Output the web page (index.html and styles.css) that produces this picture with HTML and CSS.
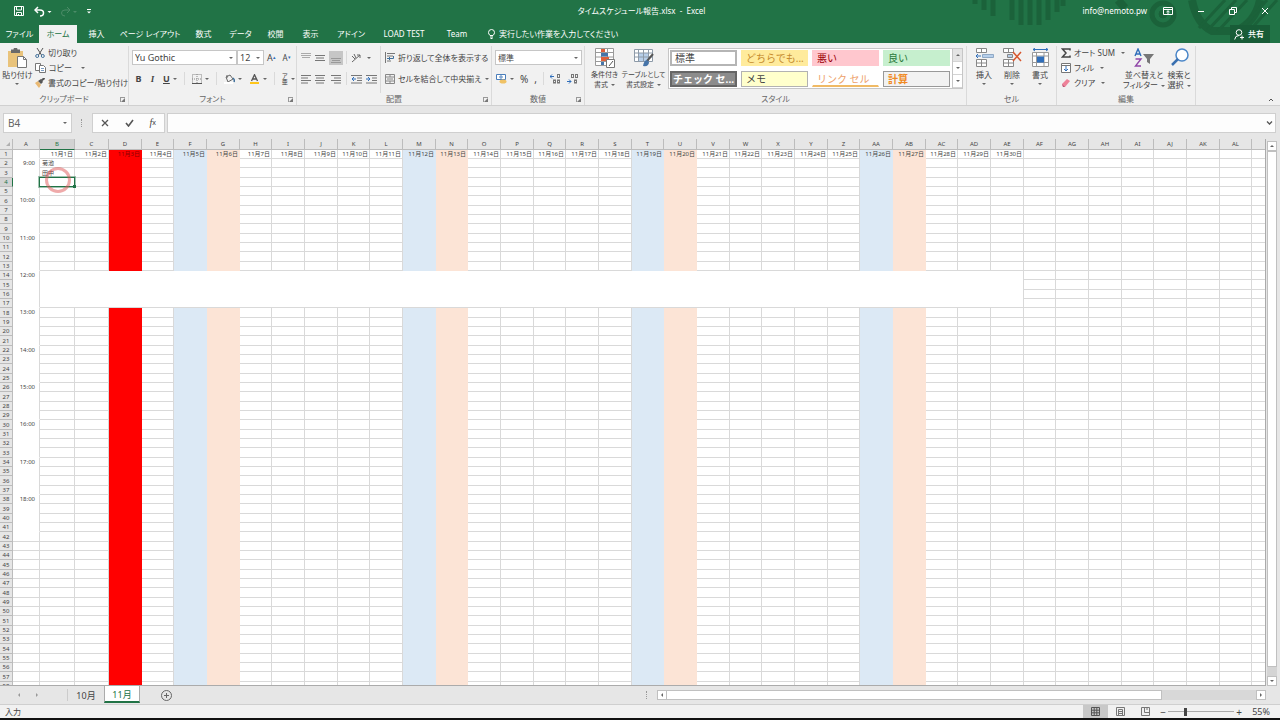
FILE: index.html
```
<!DOCTYPE html>
<html lang="ja">
<head>
<meta charset="utf-8">
<title>タイムスケジュール報告.xlsx - Excel</title>
<link rel="stylesheet" href="styles.css">
</head>
<body>
<div class="app">
  <header class="top">
    <svg class="pattern" width="330" height="43" viewBox="0 0 330 43" fill="none" stroke="#1b623a">
      <path d="M25 0v4M34 0v10M43 0v16M62 0v20M71 0v25M80 0v25M89 0v25M98 0v20M107 0v12M113 0v6" stroke-width="5"/>
      <circle cx="213" cy="14" r="11" stroke-width="5"/><circle cx="213" cy="14" r="4" fill="#1b623a"/>
      <path d="M168 0l7 8M242 0c3 16 10 26 20 31h24c13-6 21-16 24-31" stroke-width="8"/>
      <path d="M249 28l26-28M258 30l28-30M268 31l29-31M293 27l24-27M301 29l26-29" stroke-width="3"/>
    </svg>
    <div class="titlebar">
      <div class="quick">
        <button class="ib" aria-label="上書き保存"><svg width="10" height="10" viewBox="0 0 10 10" fill="none" stroke="#fff"><path d="M.5.5h9v9h-9zM2.500.5v3.500h5v-3.500M2.500 9.500v-3h5v3M4.500 8v1.500"/></svg></button>
        <button class="ib undo" aria-label="元に戻す"><svg width="18" height="11" viewBox="0 0 18 11" fill="none" stroke="#fff"><path d="M1.500 4h4.500q3.500 0 3.500 3t-3.500 3" stroke-width="1.500"/><path d="M4 1L1 4l3 3" stroke-width="1.500"/><path d="M13.500 5h4l-2 2z" fill="#fff" stroke="none"/></svg></button>
        <button class="ib" aria-label="やり直し"><svg width="18" height="11" viewBox="0 0 18 11" fill="none" stroke="#4c8c68"><path d="M9 4H5q-3.500 0-3.500 3T5 10M7 1l3 3-3 3"/><path d="M13 5h4l-2 2z" fill="#4c8c68" stroke="none"/></svg></button>
        <button class="ib" aria-label="クイック アクセス"><svg width="6" height="7" viewBox="0 0 6 7" fill="#fff"><path d="M1 1h4v1H1zM1 3.500h4l-2 2z"/></svg></button>
      </div>
      <h1 class="title">タイムスケジュール報告.xlsx&nbsp; -&nbsp; Excel</h1>
      <div class="account">
        <span class="mail">info@nemoto.pw</span>
        <button class="ib" aria-label="リボンの表示"><svg width="10" height="8" viewBox="0 0 10 8" fill="none" stroke="#fff"><path d="M.5.5h9v7h-9zM.5 2.500h9M5 7V4M3.500 5L5 3.700 6.500 5"/></svg></button>
        <button class="ib" aria-label="最小化"><svg width="8" height="8" viewBox="0 0 8 8" stroke="#fff"><path d="M1 4.500h6"/></svg></button>
        <button class="ib" aria-label="元のサイズ"><svg width="8" height="8" viewBox="0 0 8 8" fill="none" stroke="#fff"><path d="M.5 2.500h5v5h-5zM2.500 2.500v-2h5v5h-2"/></svg></button>
        <button class="ib" aria-label="閉じる"><svg width="8" height="8" viewBox="0 0 8 8" stroke="#fff"><path d="M1 1l6 6M7 1L1 7"/></svg></button>
      </div>
    </div>
    <nav class="tabs">
      <button class="tab">ファイル</button>
      <button class="tab on">ホーム</button>
      <button class="tab">挿入</button>
      <button class="tab wide">ページ レイアウト</button>
      <button class="tab">数式</button>
      <button class="tab short">データ</button>
      <button class="tab short">校閲</button>
      <button class="tab short">表示</button>
      <button class="tab medium">アドイン</button>
      <button class="tab long">LOAD TEST</button>
      <button class="tab medium">Team</button>
      <button class="tell"><svg width="7" height="10" viewBox="0 0 7 10" fill="none" stroke="#fff"><path d="M2 6.500Q.5 5 .5 3.500a3 3 0 0 1 6 0Q6.500 5 5 6.500zM2 8h3M2.500 9.500h2"/></svg>実行したい作業を入力してください</button>
      <button class="share"><svg width="10" height="11" viewBox="0 0 10 11" fill="none" stroke="#fff"><circle cx="5" cy="3.500" r="2.800"/><path d="M.7 10.500q.3-4 4.300-4M6 8.500h4M8 6.500v4"/></svg>共有</button>
    </nav>
  </header>

  <section class="ribbon">
    <div class="group g-clip">
      <div class="gbody">
        <button class="big paste"><svg width="20" height="20" viewBox="0 0 20 20"><path d="M1 3h15v16H1z" fill="#e9c37b"/><path d="M4 1.500h2.500a2 2 0 0 1 4 0H13V5H4z" fill="#6a6a6a"/><path d="M10.500 8.500h6l3 3v8h-9z" fill="#fff" stroke="#777"/><path d="M16.500 8.500v3h3" fill="none" stroke="#777"/></svg><span>貼り付け</span><i class="dd"></i></button>
        <div class="stack">
          <button class="row"><svg width="10" height="10" viewBox="0 0 10 10" fill="none" stroke="#555"><path d="M2 0l4.500 7M8 0L3.500 7"/><circle cx="2.200" cy="8" r="1.500" stroke="#41719c"/><circle cx="7.800" cy="8" r="1.500" stroke="#41719c"/></svg>切り取り</button>
          <button class="row"><svg width="11" height="10" viewBox="0 0 11 10" fill="#fff" stroke="#777"><path d="M.5.500h5v7h-5z"/><path d="M4.500 2.500h4l2 2v5h-6z"/><path d="M6 5.500h3M6 7.500h3" stroke="#7d9ec4"/></svg>コピー<i class="dd gap"></i></button>
          <button class="row"><svg width="10" height="10" viewBox="0 0 10 10"><path d="M0 5l3-2 3 4-2 3z" fill="#e9b872"/><path d="M3 3l3-2 2 3-2 2z" fill="#555"/><path d="M6.500 2.500L9.500 0" stroke="#555" stroke-width="2"/></svg>書式のコピー/貼り付け</button>
        </div>
      </div>
      <div class="cap">クリップボード<i class="launch"></i></div>
    </div>

    <div class="group g-font">
      <div class="gbody lines">
        <div class="line">
          <label class="combo c-face"><select aria-label="フォント"><option>Yu Gothic</option></select></label><label class="combo c-size"><select aria-label="サイズ"><option>12</option></select></label>
          <button class="ib t-a">A<sup>▴</sup></button><button class="ib t-b">A<sup>▾</sup></button>
        </div>
        <div class="line f2">
          <button class="ib"><b>B</b></button><button class="ib"><em>I</em></button><button class="ib"><u>U</u><i class="dd"></i></button><i class="sep"></i>
          <button class="ib" aria-label="罫線"><svg width="10" height="10" viewBox="0 0 10 10" fill="none" stroke="#888"><path d="M.5.500h9v9h-9zM5 0v10M0 5h10" stroke-dasharray="1 1"/><path d="M0 9.500h10" stroke="#555"/></svg><i class="dd"></i></button><i class="sep"></i>
          <button class="ib" aria-label="塗りつぶし"><svg width="11" height="10" viewBox="0 0 11 10" fill="none" stroke="#666"><path d="M2 3l4-2 3 4-5 3zM3 1v3"/><path d="M9 4q2 2 1 4" stroke="#41719c" stroke-width="1.500"/><path d="M0 9h9" stroke="#fff" stroke-width="2"/></svg><i class="dd"></i></button>
          <button class="ib" aria-label="文字色"><svg width="11" height="10" viewBox="0 0 11 10" fill="none" stroke="#555"><path d="M2.500 7L5.500.7 8.500 7M3.500 5h4" stroke-width="1.300"/><path d="M1 9h9" stroke="#ffc61a" stroke-width="2"/></svg><i class="dd"></i></button><i class="sep"></i>
          <button class="ib" aria-label="ふりがな"><span class="ruby"><span>ア</span><span>亜</span></span><i class="dd"></i></button>
        </div>
      </div>
      <div class="cap">フォント<i class="launch"></i></div>
    </div>

    <div class="group g-align">
      <div class="gbody split">
        <div class="lines al">
          <div class="line">
            <button class="ib" aria-label="上揃え"><svg width="10" height="12" viewBox="0 0 10 12"><path d="M0 1.500h10M0 3.500h10M1 5.500h8" stroke="#aaa"/></svg></button>
            <button class="ib" aria-label="中央"><svg width="10" height="12" viewBox="0 0 10 12" stroke="#777"><path d="M0 3.500h10M1 6h8M0 8.500h10"/></svg></button>
            <button class="ib pressed" aria-label="下揃え"><svg width="14" height="14" viewBox="0 0 14 14" stroke="#999"><path d="M2 7.500h10M3 9.500h8M2 11.500h10"/></svg></button>
            <i class="sep"></i>
            <button class="ib" aria-label="方向"><svg width="11" height="10" viewBox="0 0 11 10" fill="none" stroke="#666"><path d="M1 9L9 2M9 2v3M9 2H6M1 3l3 3M3 1l2 4"/></svg><i class="dd"></i></button>
          </div>
          <div class="line">
            <button class="ib" aria-label="左揃え"><svg width="10" height="10" viewBox="0 0 10 10" stroke="#777"><path d="M0 1.500h10M0 4h7M0 6.500h10M0 9h7"/></svg></button>
            <button class="ib" aria-label="中央揃え"><svg width="10" height="10" viewBox="0 0 10 10" stroke="#777"><path d="M0 1.500h10M1 4h8M0 6.500h10M1 9h8"/></svg></button>
            <button class="ib" aria-label="右揃え"><svg width="14" height="10" viewBox="0 0 14 10" stroke="#777"><path d="M2 1.500h10M5 4h7M2 6.500h10M5 9h7"/></svg></button>
            <i class="sep"></i>
            <button class="ib" aria-label="字下げ解除"><svg width="11" height="10" viewBox="0 0 11 10" stroke="#777"><path d="M0 1.500h11M6 4h5M6 6.500h5M0 9h11"/><path d="M1 5h4M3 3L1 5l2 2" fill="none" stroke="#2f6eba"/></svg></button>
            <button class="ib" aria-label="字下げ"><svg width="11" height="10" viewBox="0 0 11 10" stroke="#777"><path d="M0 1.500h11M6 4h5M6 6.500h5M0 9h11"/><path d="M0 5h4M2 3l2 2-2 2" fill="none" stroke="#2f6eba"/></svg></button>
          </div>
        </div>
        <div class="lines wrap">
          <button class="line row"><svg width="10" height="11" viewBox="0 0 10 11" fill="none" stroke="#777"><path d="M.5 0v11M2 1.500h8M2 4h6M2 9h4"/><path d="M2 6.500h6.500v-2.500M5 5L3.500 6.500 5 8" stroke="#41719c"/></svg>折り返して全体を表示する</button>
          <button class="line row"><svg width="10" height="10" viewBox="0 0 10 10" fill="none" stroke="#888"><path d="M.5.500h9v9h-9zM.5 3h9M.5 7h9M5 0v3M5 7v3M2 5h6"/></svg>セルを結合して中央揃え<i class="dd tight"></i></button>
        </div>
      </div>
      <div class="cap">配置<i class="launch"></i></div>
    </div>

    <div class="group g-num">
      <div class="gbody lines">
        <div class="line"><label class="combo c-num"><select aria-label="表示形式"><option>標準</option></select></label></div>
        <div class="line n2">
          <button class="ib" aria-label="通貨"><svg width="11" height="11" viewBox="0 0 11 11" fill="none"><path d="M.5 1.500h9v5h-9z" fill="#fff" stroke="#4a7ebb"/><circle cx="5" cy="4" r="1.200" stroke="#4a7ebb"/><ellipse cx="7" cy="8.500" rx="3.500" ry="2" fill="#f0c265"/></svg><i class="dd"></i></button>
          <button class="ib pct">%</button><button class="ib pct">,</button><i class="sep"></i>
          <button class="ib" aria-label="小数点表示を増やす"><svg width="11" height="10" viewBox="0 0 11 10" fill="none" stroke="#777"><path d="M4 2.500H0M2 .5l-2 2 2 2" stroke="#2f6eba"/><rect x="7.500" y=".5" width="2" height="3"/><rect x="3.500" y="6" width="2" height="3"/><rect x="7.500" y="6" width="2" height="3"/></svg></button>
          <button class="ib" aria-label="小数点表示を減らす"><svg width="11" height="10" viewBox="0 0 11 10" fill="none" stroke="#777"><path d="M0 7.500h4M2 5.500l2 2-2 2" stroke="#2f6eba"/><rect x="4.500" y=".5" width="2" height="3"/><rect x="8.500" y=".5" width="2" height="3"/><rect x="7.500" y="6" width="2" height="3"/></svg></button>
        </div>
      </div>
      <div class="cap">数値<i class="launch"></i></div>
    </div>

    <div class="group g-style">
      <div class="gbody">
        <button class="big"><svg width="20" height="20" viewBox="0 0 20 20" fill="none"><path d="M.5.500h18v17H.5z" fill="#fff"/><path d="M.5.500h18v17H.5zM0 4.500h18M0 9h18M0 13.500h18M6.500 0v18M12.500 0v18" stroke="#9a9a9a"/><path d="M6 1h4v3H6zM6 9h8v4H6z" fill="#e0603a"/><path d="M6 5h7v3.500H6zM6 14h3v3H6z" fill="#4674a8"/><path d="M11.500 11.500h8v8h-8z" fill="#fff" stroke="#777"/><path d="M14 18l4-5" stroke="#555"/></svg><span>条件付き</span><span>書式<i class="dd"></i></span></button>
        <button class="big tbl"><svg width="20" height="20" viewBox="0 0 20 20" fill="none"><path d="M.5 1.500h18v12H.5z" fill="#fff"/><path d="M4 5h11v8H4z" fill="#b7cfea"/><path d="M.5 1.500h18v12H.5zM0 5h18M0 9h18M4.500 2v12M9.500 2v12M14.500 2v12" stroke="#8d9aa8"/><path d="M19 6l-6 7" stroke="#555" stroke-width="2"/><path d="M13 12q-3 0-4 6 6 1 6-4z" fill="#4674a8"/></svg><span>テーブルとして</span><span>書式設定<i class="dd"></i></span></button>
        <div class="gallery">
          <div class="swatches">
            <button class="sw s-normal">標準</button><button class="sw s-neutral">どちらでも...</button><button class="sw s-bad">悪い</button><button class="sw s-good">良い</button>
            <button class="sw s-check">チェック セ...</button><button class="sw s-memo">メモ</button><button class="sw s-link">リンク セル</button><button class="sw s-calc">計算</button>
          </div>
          <div class="gscroll"><button class="off" aria-label="上へ"><i class="ua"></i></button><button aria-label="下へ"><i class="dd"></i></button><button class="more" aria-label="その他"><i class="dd"></i></button></div>
        </div>
      </div>
      <div class="cap">スタイル</div>
    </div>

    <div class="group g-cell">
      <div class="gbody">
        <button class="big"><svg width="19" height="20" viewBox="0 0 19 20" fill="#fff" stroke="#888"><path d="M1.500.5h10v4h-10zM6.500.5v4M1.500 11.500h10v7h-10zM6.500 11v7M1.500 15h10"/><path d="M7.500 6.500h11v3h-11z" fill="#b7cfea" stroke="#8fa9c6"/><path d="M6 8H1M3 6L1 8l2 2" fill="none" stroke="#2f6eba"/></svg><span>挿入</span><i class="dd"></i></button>
        <button class="big"><svg width="20" height="20" viewBox="0 0 20 20" fill="#fff" stroke="#888"><path d="M1.500.5h10v4h-10zM6.500.5v4M1.500 11.500h10v7h-10zM6.500 11v7M1.500 15h10"/><path d="M5.500 6.500h5v3h-5z" fill="#b7cfea"/><path d="M11 4l8 9M19 4l-8 9" stroke="#d8562d" stroke-width="1.500"/></svg><span>削除</span><i class="dd"></i></button>
        <button class="big"><svg width="19" height="20" viewBox="0 0 19 20" fill="#fff" stroke="#999"><path d="M1.500 4.500h16v14h-16zM1 8h17M1 14.500h17M5.500 4v15M13 4v15"/><path d="M6 8.500h7v6H6z" fill="#2f6eba" stroke="none"/><path d="M2 1.500h15M4 0L2 1.500 4 3M15 0l2 1.500L15 3" fill="none" stroke="#2f6eba"/></svg><span>書式</span><i class="dd"></i></button>
      </div>
      <div class="cap">セル</div>
    </div>

    <div class="group g-edit">
      <div class="gbody">
        <div class="stack">
          <button class="row"><svg width="10" height="10" viewBox="0 0 10 10" fill="none" stroke="#444" stroke-width="1.500"><path d="M9 2.500V1H1.500L5 5 1.500 9H9V7.500"/></svg>オート SUM<i class="dd"></i></button>
          <button class="row"><svg width="10" height="10" viewBox="0 0 10 10" fill="#fff" stroke="#777"><path d="M.5.500h9v9h-9zM0 2.500h10"/><path d="M5 3v5M3 6l2 2 2-2" fill="none" stroke="#2f6eba"/></svg>フィル<i class="dd"></i></button>
          <button class="row"><svg width="10" height="10" viewBox="0 0 10 10"><path d="M1 6l5-5 3 2-5 6H2z" fill="#ee8299"/><path d="M1 6l3 3H2z" fill="#b55a78"/></svg>クリア<i class="dd"></i></button>
        </div>
        <button class="big sort"><svg width="20" height="20" viewBox="0 0 20 20" fill="none"><path d="M1 8l3-7 3 7M2 6h4" stroke="#2f6eba" stroke-width="1.400"/><path d="M1.500 11H7l-5.500 7H7" stroke="#9046a8" stroke-width="1.400"/><path d="M9 6h11l-4 5v5l-3-2v-3z" fill="#777"/></svg><span>並べ替えと</span><span>フィルター<i class="dd"></i></span></button>
        <button class="big"><svg width="19" height="20" viewBox="0 0 19 20" fill="none"><circle cx="12" cy="7" r="6" fill="#fff" stroke="#4a86c8" stroke-width="1.500"/><path d="M8 11l-6 6" stroke="#3a70b0" stroke-width="2.500"/></svg><span>検索と</span><span>選択<i class="dd"></i></span></button>
      </div>
      <div class="cap">編集</div>
    </div>
    <button class="collapse ib" aria-label="リボンを折りたたむ"><svg width="6" height="5" viewBox="0 0 6 5" fill="none" stroke="#555"><path d="M1 4l2-2 2 2"/></svg></button>
  </section>

  <section class="fbar">
    <label class="namebox"><input aria-label="名前ボックス" value="B4"><i class="dd"></i></label>
    <i class="dots"></i>
    <div class="fbtns">
      <button class="ib" aria-label="キャンセル"><svg width="8" height="8" viewBox="0 0 8 8" stroke="#555" stroke-width="1.300"><path d="M1 1l6 6M7 1L1 7"/></svg></button>
      <button class="ib" aria-label="入力"><svg width="9" height="8" viewBox="0 0 9 8" fill="none" stroke="#555" stroke-width="1.600"><path d="M1 4l2.500 3L8 1"/></svg></button>
      <button class="ib fx"><em>f</em><small>x</small></button>
    </div>
    <label class="formula"><input aria-label="数式バー"><svg width="7" height="6" viewBox="0 0 7 6" fill="none" stroke="#555" stroke-width="1.300"><path d="M1 1.500l2.500 2.500L6 1.500"/></svg></label>
  </section>

  <main class="work">
    <div class="sheet"><table class="grid" id="grid"></table></div>
    <div class="vscroll"><button aria-label="上へスクロール"><i class="ua"></i></button><div class="vthumb"></div><div class="vtrack"></div><button aria-label="下へスクロール"><i class="dd"></i></button></div>
  </main>

  <footer class="bottom">
    <div class="sheets">
      <div class="nav"><i class="la"></i><i class="ra"></i></div>
      <button class="st">10月</button><button class="st on">11月</button>
      <button class="ib add" aria-label="新しいシート"><svg width="11" height="11" viewBox="0 0 11 11" fill="none" stroke="#666"><circle cx="5.500" cy="5.500" r="5"/><path d="M3 5.500h5M5.500 3v5"/></svg></button>
      <div class="hscroll"><i class="dots"></i><button aria-label="左へ"><i class="la"></i></button><div class="hthumb"></div><div class="htrack"></div><button aria-label="右へ"><i class="ra"></i></button></div>
    </div>
    <div class="status">
      <span class="mode">入力</span>
      <button class="view on" aria-label="標準"><svg width="9" height="9" viewBox="0 0 9 9" fill="none" stroke="#555"><path d="M.5.500h8v8h-8zM0 3.200h9M0 5.800h9M3.200 0v9M5.800 0v9"/></svg></button>
      <button class="view" aria-label="ページ レイアウト"><svg width="9" height="9" viewBox="0 0 9 9" fill="none" stroke="#777"><path d="M.5.500h8v8h-8zM2.500 2.500h4v6h-4zM3 4.500h3M3 6.500h3"/></svg></button>
      <button class="view" aria-label="改ページ プレビュー"><svg width="9" height="9" viewBox="0 0 9 9" fill="none" stroke="#777"><path d="M.5.500h8v8h-8zM3.500 0v5.500h5M6 0v3"/></svg></button>
      <span class="sign">−</span><input class="zoom" type="range" min="10" max="190" value="54" aria-label="ズーム"><span class="sign">+</span><span class="pc">55%</span>
    </div>
    <div class="edge"></div>
  </footer>
</div>
<script src="grid.js"></script>
</body>
</html>
```
FILE: styles.css
```
* { box-sizing: border-box; }
body { margin: 0; font: 8px/10px "Noto Sans", "Noto Sans CJK JP", sans-serif; color: #444; }
button { border: 0; padding: 0; margin: 0; background: none; font: inherit; color: inherit; white-space: nowrap; }
input, select { font: inherit; color: inherit; border: 0; margin: 0; padding: 0; background: none; outline: 0; appearance: none; min-width: 0; }
svg { display: block; flex: none; }
.app { height: 100vh; display: flex; flex-direction: column; background: #e6e6e6; font-feature-settings: "palt"; }
.ib { display: inline-flex; align-items: center; justify-content: center; gap: 2px; }

.dd, .ua, .la, .ra { display: inline-block; width: 0; height: 0; border: 2px solid transparent; flex: none; }
.dd { border-top-color: #666; border-bottom: 0; margin-left: 3px; vertical-align: middle; }
.ua { border-bottom-color: #666; border-top: 0; }
.la { border-right-color: #666; border-left: 0; }
.ra { border-left-color: #666; border-right: 0; }
.tight { margin-left: 0; }
.dots { width: 1px; height: 8px; border-left: 1px dotted #999; }

.top { background: #217346; color: #fff; position: relative; }
.pattern { position: absolute; right: 0; top: 0; }
.titlebar { height: 25px; display: flex; align-items: center; position: relative; padding: 0 11px 3px 14px; }
.quick { flex: 1; display: flex; align-items: center; gap: 8px; }
.quick .undo { margin-left: 2px; }
.title { margin: 0; font-weight: 400; font-size: 8px; }
.account { flex: 1; display: flex; justify-content: flex-end; align-items: center; gap: 24px; }
.mail { margin-right: -8px; }
.tabs { height: 18px; display: flex; align-items: stretch; position: relative; padding-right: 10px; }
.tab { width: 39px; }
.tab.short { width: 35px; }
.tab.medium { width: 46px; }
.tab.long { width: 60px; }
.tab.wide { width: 68px; }
.tab.on { width: 38px; background: #f1f1f1; color: #217346; }
.tell { display: flex; align-items: center; gap: 4px; margin-left: 8px; }
.share { display: flex; align-items: center; gap: 4px; margin-left: auto; padding: 0 6px 0 4px; background: #185c37; font-weight: 500; }

.ribbon { height: 63px; flex: none; display: flex; background: #f1f1f1; border-bottom: 1px solid #d0d0d0; padding-top: 3px; position: relative; }
.group { display: flex; flex-direction: column; border-right: 1px solid #dadada; flex: none; }
.gbody { flex: 1; display: flex; }
.cap { height: 12px; display: flex; align-items: center; justify-content: center; color: #666; position: relative; }
.launch { position: absolute; right: 3px; bottom: 3px; width: 5px; height: 5px; border-left: 1px solid #999; border-top: 1px solid #999; }
.launch::after { content: ""; position: absolute; right: 0; bottom: 0; border: 2px solid transparent; border-right-color: #777; border-bottom-color: #777; }
.g-clip { width: 129px; }
.g-font { width: 168px; }
.g-align { width: 195px; }
.g-num { width: 93px; }
.g-style { width: 382px; }
.g-cell { width: 90px; }
.g-edit { width: 139px; }
.big { display: flex; flex-direction: column; align-items: center; width: 39px; padding-top: 2px; }
.big svg { margin-bottom: 2px; }
.big > .dd { margin: 3px 0 0; }
.paste { width: 36px; }
.stack { display: flex; flex-direction: column; padding-top: 2px; gap: 5px; }
.row { height: 10px; display: flex; align-items: center; gap: 3px; }
.gap { margin-left: 6px; }
.lines { display: flex; flex-direction: column; gap: 6px; padding-top: 4px; }
.line { height: 15px; display: flex; align-items: center; }
.sep { width: 1px; height: 13px; background: #dadada; }
.g-font .lines { padding-left: 3px; }
.combo { position: relative; display: flex; height: 15px; background: #fff; border: 1px solid #c6c6c6; }
.combo select { width: 100%; padding-left: 2px; font-size: 9px; line-height: 13px; }
.combo::after { content: ""; position: absolute; right: 3px; top: 6px; border: 2px solid transparent; border-top-color: #666; border-bottom: 0; }
.c-face { width: 105px; }
.c-size { width: 27px; }
.c-num { width: 87px; }
.c-num select { font-size: 8px; }
.t-a, .t-b { width: 15px; font-size: 9px; gap: 0; }
.t-b { font-size: 8px; }
sup { font-size: 5px; line-height: 5px; color: #2f6eba; }
.f2 { gap: 7px; padding-left: 3px; font-size: 9px; }
.f2 .ib { min-width: 7px; }
.f2 em { font-family: "Liberation Serif", serif; font-weight: 700; }
.f2 u { font-weight: 700; }
.f2 .dd, .n2 .dd { margin-left: 1px; }
.ruby { display: flex; flex-direction: column; font-size: 6px; line-height: 6px; }
.split { padding-left: 4px; }
.al { width: 80px; border-right: 1px solid #dadada; }
.al .line { gap: 4px; }
.al .sep { margin-left: -1px; }
.pressed { background: #c6c6c6; }
.wrap { padding-left: 4px; }
.wrap .line { gap: 3px; }
.g-num .lines { padding-left: 3px; }
.n2 { gap: 6px; padding-left: 1px; }
.pct { font-size: 10px; }
.g-style .big { font-size: 7px; }
.g-style .gallery { margin-left: 5px; }
.gallery { display: flex; height: 41px; margin-top: 2px; border: 1px solid #c6c6c6; background: #fff; }
.swatches { width: 283px; display: grid; grid-template-columns: repeat(4, 67px); column-gap: 4px; align-content: space-between; padding: 1px; }
.sw { height: 16px; text-align: left; padding-left: 4px; font-size: 10px; line-height: 14px; font-feature-settings: normal; border: 1px solid transparent; overflow: hidden; }
.s-normal { border: 2px solid #b5b5b5; padding-left: 3px; line-height: 12px; }
.s-neutral { background: #ffeb9c; color: #c58a2c; }
.s-bad { background: #ffc7ce; color: #9c0006; }
.s-good { background: #c6efce; color: #2b7a3b; }
.s-check { background: #8c8c8c; color: #fff; font-weight: 700; border: 2px solid #666; padding-left: 1px; line-height: 12px; }
.s-memo { background: #ffffcc; border-color: #b2b2b2; }
.s-link { color: #eda06a; border-bottom: 2px solid #f0ba65; }
.s-calc { background: #f2f2f2; color: #f08a24; font-weight: 700; border-color: #999; }
.gscroll { width: 10px; display: flex; flex-direction: column; border-left: 1px solid #c6c6c6; }
.gscroll button { flex: 1; display: flex; align-items: center; justify-content: center; border-bottom: 1px solid #d4d4d4; }
.gscroll .dd { margin: 0; }
.gscroll .off { background: #e4e4e4; }
.more .dd { box-shadow: 0 -3px 0 -1px #666; }
.g-cell .gbody { padding-left: 3px; }
.g-cell .big { width: 28px; }
.g-edit .gbody { padding-left: 4px; }
.g-edit .stack { width: 64px; }
.g-edit .big { width: 32px; }
.g-edit .sort { width: 38px; }
.collapse { position: absolute; right: 6px; bottom: 3px; }

.fbar { height: 33px; flex: none; display: flex; align-items: center; padding: 0 4px 0 3px; }
.namebox, .fbtns, .formula { height: 20px; display: flex; align-items: center; background: #fdfdfd; border: 1px solid #cfcfcf; }
.namebox { width: 69px; padding: 0 4px; font-size: 10px; color: #666; }
.namebox input { flex: 1; }
.fbar .dots { margin: 0 10px 0 9px; }
.fbtns { width: 73px; justify-content: space-around; }
.fx { gap: 0; font-size: 10px; }
.fx em { font-family: "Liberation Serif", serif; }
.fx small { font-size: 7px; }
.formula { flex: 1; margin-left: 2px; padding-right: 2px; }
.formula input { flex: 1; height: 18px; }

.work { flex: 1; min-height: 0; display: flex; }
.sheet { flex: 1; min-width: 0; overflow: hidden; background: #fff; border-right: 1px solid #ababab; border-bottom: 1px solid #ababab; }
.grid { border-collapse: separate; border-spacing: 0; table-layout: fixed; font-size: 6px; line-height: 8px; }
.grid td, .grid th { padding: 0; border: 0 solid #d9d9d9; border-width: 0 1px 1px 0; white-space: nowrap; font-weight: 400; height: 9px; }
.grid tr:nth-child(3n+1) > * { height: 10px; }
.grid .head th { height: 11px; background: #e6e6e6; border-color: #bcbcbc; line-height: 10px; }
.grid .num { background: #e6e6e6; border-color: #bcbcbc; text-align: center; }
.grid .head .sel { background: #d2d2d2; border-bottom-color: #217346; color: #217346; }
.grid .num.sel { background: #d2d2d2; border-right-color: #217346; color: #217346; }
.grid .corner::after { content: ""; display: block; width: 0; margin-left: 6px; border: 2px solid transparent; border-right-color: #b0b0b0; border-bottom-color: #b0b0b0; }
.grid .date { text-align: right; padding-right: 1px; }
.grid .plain { border-bottom-color: #fff; }
.grid .time { text-align: right; vertical-align: top; padding-right: 4px; }
.grid .name { padding-left: 2px; }
.grid .hol { background: #f00; border-color: #f00; color: #8a0000; }
.grid .sat { background: #dce9f5; border-color: #dce9f5; }
.grid .sun { background: #fce4d6; border-color: #fce4d6; }
.grid .active { position: relative; }
.box { position: absolute; inset: -1px; border: 1px solid #217346; box-shadow: 0 0 0 1px #2173466b; }
.box::after { content: ""; position: absolute; right: -2px; bottom: -2px; width: 3px; height: 3px; background: #217346; }
.ring { position: absolute; left: 50%; top: 50%; width: 26px; height: 26px; margin: -15px 0 0 -12px; border: 3px solid #e0555580; border-radius: 50%; }
.vscroll { width: 14px; display: flex; flex-direction: column; padding: 2px 1px 0; }
.vscroll button, .hscroll button { width: 10px; height: 10px; display: flex; align-items: center; justify-content: center; background: #fff; border: 1px solid #c0c0c0; flex: none; }
.vscroll button .dd { margin: 0; }
.vthumb { width: 10px; flex: 60; background: #fff; border: 1px solid #c0c0c0; }
.vtrack { width: 10px; flex: 1; background: #d4d4d4; }

.sheets { height: 18px; display: flex; align-items: center; padding-right: 14px; }
.nav { width: 68px; height: 12px; display: flex; align-items: center; gap: 16px; padding-left: 18px; border-right: 1px solid #bbb; opacity: .6; }
.st { height: 17px; width: 36px; font-size: 9px; padding-top: 2px; align-self: flex-start; }
.st.on { background: #fff; color: #217346; border-bottom: 2px solid #217346; border-right: 1px solid #ababab; border-left: 1px solid #ababab; padding-top: 3px; }
.add { margin-left: 21px; }
.hscroll { flex: none; width: 49%; margin-left: auto; display: flex; align-items: center; }
.hscroll .dots { margin-right: 10px; }
.hthumb { flex: 84; height: 10px; background: #fff; border: 1px solid #c0c0c0; border-left: 0; }
.htrack { flex: 16; height: 10px; background: #d8d8d8; }
.status { height: 14px; display: flex; align-items: center; background: #f1f1f1; border-top: 1px solid #cfcfcf; padding: 0 10px 0 5px; }
.mode { margin-right: auto; }
.view { width: 25px; height: 13px; display: flex; align-items: center; justify-content: center; }
.view.on { background: #c8c8c8; }
.sign { font-size: 10px; width: 10px; text-align: center; }
.zoom { width: 66px; height: 9px; background: linear-gradient(#aaa, #aaa) center / 100% 1px no-repeat; }
.zoom::-webkit-slider-thumb { appearance: none; width: 3px; height: 8px; background: #444; }
.pc { font-size: 9px; margin-left: 8px; }
.edge { height: 2px; background: #111; }
```
FILE: grid.js
```
const grid = document.getElementById('grid');
const names = [];
for (let i = 0; i < 38; i++) {
  names.push(i < 26 ? String.fromCharCode(65 + i) : 'A' + String.fromCharCode(39 + i));
}
names.push('');
const widths = [13, 27, 35, 34, 33];
for (let i = 4; i < 39; i++) widths.push((i - 4) % 3 === 0 ? 32 : 33);

const holidays = { 3: 'hol' };
[5, 12, 19, 26].forEach(d => { holidays[d] = 'sat'; holidays[d + 1] = 'sun'; });
const people = { 2: '菊池', 3: '田中' };

let html = '<colgroup>' + widths.map(w => `<col style="width:${w}px">`).join('') + '</colgroup>';
html += '<tr class="head"><th class="corner"></th>' +
  names.map(n => `<th${n === 'B' ? ' class="sel"' : ''}>${n}</th>`).join('') + '</tr>';

for (let r = 1; r <= 58; r++) {
  html += `<tr><th class="num${r === 4 ? ' sel' : ''}">${r}</th>`;
  const inBlock = r >= 2 && r <= 41;
  if (!inBlock) html += `<td${r === 1 ? ' class="plain"' : ''}></td>`;
  else if ((r - 2) % 4 === 0) html += `<td class="time plain" rowspan="4">${9 + (r - 2) / 4}:00</td>`;
  const lunch = r >= 14 && r <= 17;
  if (r === 14) html += '<td colspan="30" rowspan="4"></td>';
  for (let c = 1; c < 39; c++) {
    if (lunch && c <= 30) continue;
    const kind = holidays[c] || '';
    if (r === 1 && c <= 30) html += `<td class="date ${kind}">11月${c}日</td>`;
    else if (c === 1 && people[r]) html += `<td class="name">${people[r]}</td>`;
    else if (c === 1 && r === 4) html += '<td class="active"><span class="box"></span><span class="ring"></span></td>';
    else html += `<td class="${kind}"></td>`;
  }
  html += '</tr>';
}
grid.innerHTML = html;
grid.style.width = widths.reduce((a, b) => a + b, 0) + 'px';
```
